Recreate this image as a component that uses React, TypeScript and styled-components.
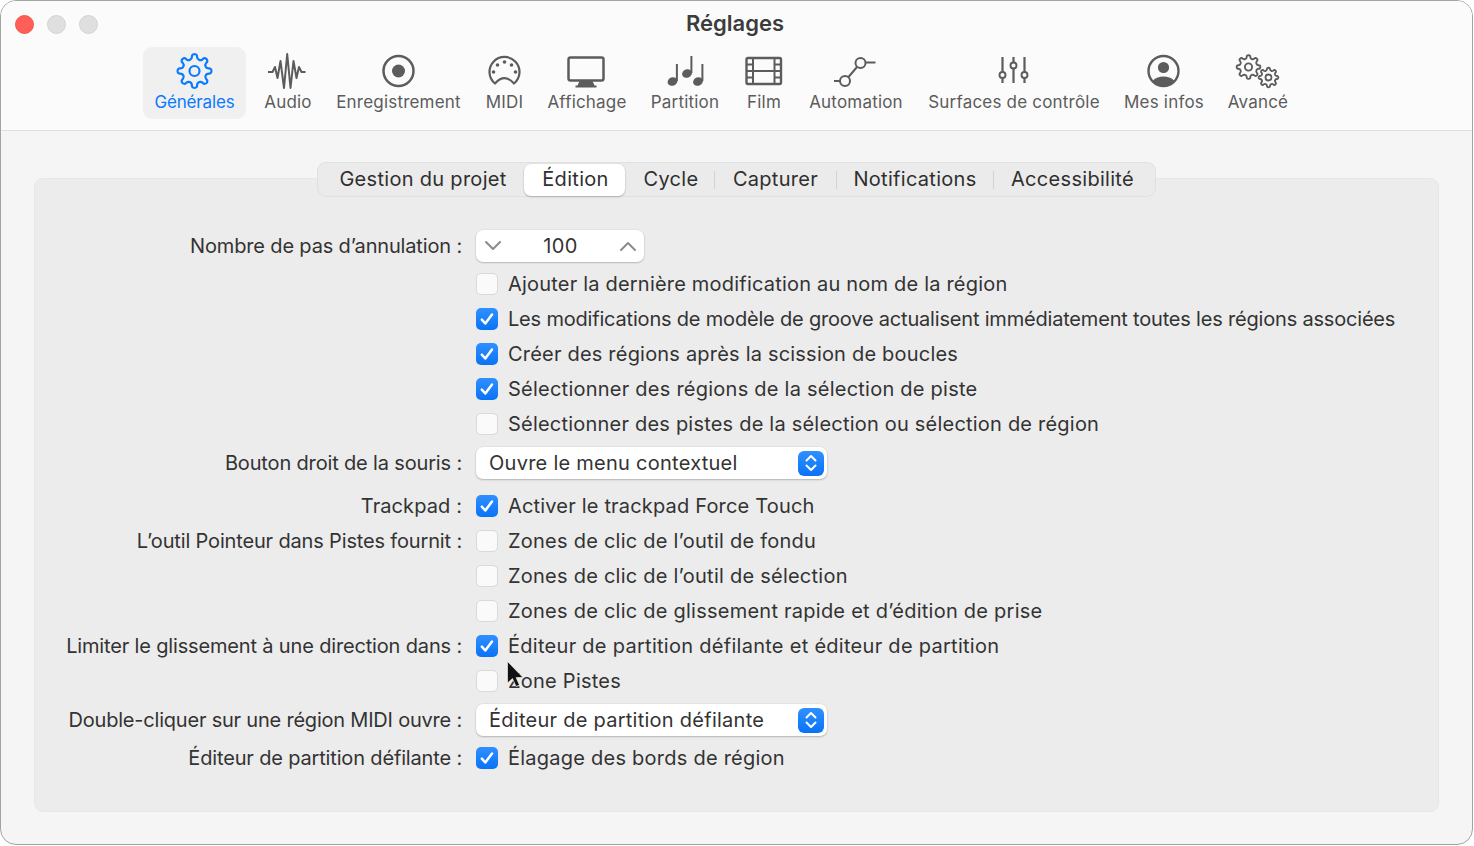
import React from "react";
import styled, { createGlobalStyle } from "styled-components";

const GlobalStyle = createGlobalStyle`
  html, body {
    margin: 0;
    padding: 0;
    background: #ffffff;
  }
  body {
    font-family: "Inter", "Liberation Sans", sans-serif;
    -webkit-font-smoothing: antialiased;
  }
`;

const Window = styled.div`
  position: relative;
  box-sizing: border-box;
  width: 1473px;
  height: 845px;
  border: 1px solid #a3a3a3;
  border-radius: 16px;
  overflow: hidden;
  background: #f5f5f5;
`;

const Toolbar = styled.header`
  box-sizing: border-box;
  height: 130px;
  background: #fbfbfb;
  border-bottom: 1px solid #dedede;
`;

const TitleBar = styled.div`
  display: grid;
  grid-template-columns: 1fr auto 1fr;
  align-items: center;
  height: 46px;
`;

const Lights = styled.div`
  display: flex;
  gap: 13px;
  padding-left: 14px;
`;

const Light = styled.span<{ $color: string; $edge: string }>`
  box-sizing: border-box;
  width: 19px;
  height: 19px;
  margin-top: 1px;
  border-radius: 50%;
  background: ${(p) => p.$color};
  border: 1px solid ${(p) => p.$edge};
`;

const Title = styled.h1`
  margin: 0 0 2px;
  font-size: 22px;
  line-height: 44px;
  font-weight: 600;
  color: #3c3c3c;
  transform: translateX(-1.5px);
`;

const ToolRow = styled.nav`
  display: flex;
  padding-left: 142px;
`;

const ToolItem = styled.div<{ $width: number; $active?: boolean }>`
  box-sizing: border-box;
  width: ${(p) => p.$width}px;
  height: 72px;
  padding-top: 5px;
  border-radius: 9px;
  background: ${(p) => (p.$active ? "#f0f0f0" : "transparent")};
  color: ${(p) => (p.$active ? "#0a7aff" : "#5c5c5c")};
  display: flex;
  flex-direction: column;
  align-items: center;
`;

const ToolLabel = styled.span<{ $active?: boolean }>`
  margin-top: 1px;
  font-size: 17px;
  line-height: 18px;
  letter-spacing: ${(p) => (p.$active ? "-0.15px" : "0.2px")};
  white-space: nowrap;
`;

const Content = styled.main`
  display: flex;
  flex-direction: column;
  align-items: center;
  padding: 31px 33px 0;
`;

const Tabs = styled.div`
  position: relative;
  z-index: 1;
  display: flex;
  align-items: center;
  box-sizing: border-box;
  height: 35px;
  margin: 0 0 -19px -1px;
  padding: 0 5px;
  background: #ebebeb;
  border: 1px solid #e0e0e0;
  border-radius: 9px;
`;

const Tab = styled.div<{ $width: number; $active?: boolean; $divider?: boolean; $shift?: number }>`
  position: relative;
  box-sizing: border-box;
  width: ${(p) => p.$width}px;
  height: 32px;
  line-height: 30px;
  padding-left: ${(p) => p.$shift ?? 0}px;
  text-align: center;
  font-size: 20px;
  letter-spacing: 0.3px;
  color: #2f2f2f;
  white-space: nowrap;
  border-radius: 7px;
  background: ${(p) => (p.$active ? "#ffffff" : "transparent")};
  box-shadow: ${(p) =>
    p.$active ? "0 1px 2px rgba(0,0,0,0.22), 0 0 0 0.5px rgba(0,0,0,0.05)" : "none"};

  &::after {
    content: "";
    display: ${(p) => (p.$divider ? "block" : "none")};
    position: absolute;
    right: 0;
    top: 7px;
    height: 18px;
    width: 1px;
    background: #d3d3d3;
  }
`;

const Panel = styled.section`
  box-sizing: border-box;
  width: 100%;
  height: 634px;
  padding-top: 48.5px;
  background: #ececec;
  border: 1px solid #e7e7e7;
  border-radius: 9px;
`;

const Row = styled.div<{ $height?: number; $pad?: number }>`
  box-sizing: border-box;
  display: grid;
  grid-template-columns: 427px 1fr;
  column-gap: 14px;
  align-items: center;
  height: ${(p) => p.$height ?? 35.2}px;
  padding-bottom: ${(p) => p.$pad ?? 0}px;
`;

const Label = styled.div<{ $spacing?: number }>`
  text-align: right;
  font-size: 20px;
  letter-spacing: ${(p) => p.$spacing ?? -0.16}px;
  color: #333333;
  white-space: nowrap;
`;

const CheckLine = styled.div<{ $spacing: number }>`
  display: flex;
  align-items: center;
  gap: 10px;
  font-size: 20px;
  letter-spacing: ${(p) => p.$spacing}px;
  color: #333333;
  white-space: nowrap;
`;

const Box = styled.span<{ $on?: boolean }>`
  box-sizing: border-box;
  flex: none;
  display: flex;
  align-items: center;
  justify-content: center;
  width: 22px;
  height: 22px;
  border-radius: 5px;
  background: ${(p) => (p.$on ? "linear-gradient(#2f90ff, #0a72f5)" : "#fafafa")};
  border: ${(p) => (p.$on ? "none" : "1px solid #d9d9d9")};
`;

const Stepper = styled.div`
  box-sizing: border-box;
  display: flex;
  align-items: center;
  justify-content: space-between;
  width: 168px;
  height: 32px;
  padding: 0 7px 0 8px;
  background: #ffffff;
  border-radius: 7px;
  box-shadow: 0 1px 2px rgba(0, 0, 0, 0.2), 0 0 0 0.5px rgba(0, 0, 0, 0.06);
  font-size: 20px;
  letter-spacing: 0.4px;
  color: #333333;
`;

const SelectBox = styled.div`
  box-sizing: border-box;
  display: flex;
  align-items: center;
  justify-content: space-between;
  width: 351px;
  height: 32px;
  padding: 0 3px 0 13px;
  background: #ffffff;
  border-radius: 7px;
  box-shadow: 0 1px 2px rgba(0, 0, 0, 0.22), 0 0 0 0.5px rgba(0, 0, 0, 0.06);
  font-size: 20px;
  letter-spacing: 0.26px;
  color: #333333;
  white-space: nowrap;
`;

const SelectKnob = styled.span`
  display: flex;
  align-items: center;
  justify-content: center;
  width: 26px;
  height: 25px;
  border-radius: 6px;
  background: linear-gradient(#2f90ff, #0a72f5);
`;

const Pointer = styled.svg`
  position: absolute;
  left: 504px;
  top: 659px;
`;

// gear outline with rounded lobes
const gearPath = (cx: number, cy: number, ro: number, ri: number, teeth: number) => {
  const step = (Math.PI * 2) / teeth;
  const pt = (r: number, a: number) =>
    `${(cx + r * Math.cos(a)).toFixed(2)} ${(cy + r * Math.sin(a)).toFixed(2)}`;
  let d = "";
  for (let i = 0; i < teeth; i++) {
    const a = i * step - Math.PI / 2;
    const w = step * 0.24;
    const start = pt(ri, a - step / 2);
    if (i === 0) d += `M${start} `;
    d += `Q${pt(ri, a - w * 1.25)} ${pt((ri + ro) / 2, a - w * 0.95)} `;
    d += `Q${pt(ro * 1.03, a - w * 0.9)} ${pt(ro * 1.03, a)} `;
    d += `Q${pt(ro * 1.03, a + w * 0.9)} ${pt((ri + ro) / 2, a + w * 0.95)} `;
    d += `Q${pt(ri, a + w * 1.25)} ${pt(ri, a + step / 2)} `;
  }
  return d + "Z";
};

const Glyph: React.FC<{ x: number; w: number; children: React.ReactNode }> = ({ x, w, children }) => (
  <svg width={w} height={40} viewBox={`${x + 0.5} 52 ${w} 40`} fill="none" stroke="currentColor" strokeWidth={2.2}>
    {children}
  </svg>
);

const GearIcon = () => (
  <Glyph x={174} w={40}>
    <path d={gearPath(194, 71, 16.5, 12, 8)} strokeLinejoin="round" />
    <circle cx={194} cy={71} r={5} />
  </Glyph>
);

const AudioIcon = () => (
  <Glyph x={268} w={40}>
    <path
      d="M268 72H273L275.5 67L278 78L281 61L284.5 88L287.7 54L291 88L294 61L297 78L299.5 67L302 72H306"
      strokeWidth={2}
      strokeLinejoin="round"
    />
  </Glyph>
);

const RecordIcon = () => (
  <Glyph x={378} w={40}>
    <circle cx={398} cy={71} r={15} strokeWidth={2.5} />
    <circle cx={398} cy={71} r={6.5} fill="currentColor" stroke="none" />
  </Glyph>
);

const MidiIcon = () => (
  <Glyph x={485} w={40}>
    <path
      d="M495.5 83.5A15 15 0 1 1 514.5 83.5C511 79.5 508 78.2 505 78.2C502 78.2 499 79.5 495.5 83.5Z"
      strokeLinejoin="round"
    />
    <g fill="currentColor" stroke="none">
      <circle cx={494} cy={72} r={1.8} />
      <circle cx={498} cy={65} r={1.8} />
      <circle cx={505} cy={62} r={1.8} />
      <circle cx={512} cy={65} r={1.8} />
      <circle cx={516} cy={72} r={1.8} />
    </g>
  </Glyph>
);

const DisplayIcon = () => (
  <Glyph x={567} w={40}>
    <rect x={569} y={57.5} width={35} height={23} rx={2} strokeWidth={2.5} />
    <path d="M580 81H593L595 85.5H597V87.5H576V85.5H578Z" fill="currentColor" stroke="none" />
  </Glyph>
);

const NotesIcon = () => (
  <Glyph x={665} w={40}>
    <g fill="currentColor" stroke="none">
      <ellipse cx={673} cy={81.5} rx={5} ry={4.2} transform="rotate(-20 673 81.5)" />
      <rect x={676.4} y={64} width={2} height={17} />
      <ellipse cx={687.5} cy={73.5} rx={5} ry={4.2} transform="rotate(-20 687.5 73.5)" />
      <rect x={690.9} y={56} width={2} height={17} />
      <ellipse cx={698.5} cy={81.5} rx={5} ry={4.2} transform="rotate(-20 698.5 81.5)" />
      <rect x={701.9} y={64} width={2} height={17} />
    </g>
  </Glyph>
);

const FilmIcon = () => (
  <Glyph x={744} w={40}>
    <rect x={747} y={58} width={34.5} height={26} rx={1.5} strokeWidth={2.4} />
    <path d="M753.5 58V84M775 58V84M753.5 71H775" strokeWidth={2} />
    <path d="M747 64.5H753M747 71H753M747 77.5H753M775.5 64.5H781M775.5 71H781M775.5 77.5H781" strokeWidth={1.8} />
  </Glyph>
);

const AutomationIcon = () => (
  <Glyph x={836} w={44}>
    <circle cx={847.5} cy={81} r={5} strokeWidth={2} />
    <circle cx={863} cy={63} r={5} strokeWidth={2} />
    <path d="M833 81H842.5M851 77L859.5 67M868 62.5H878" strokeWidth={2} />
  </Glyph>
);

const FaderIcon = () => (
  <Glyph x={994} w={40}>
    <path d="M1003 57V83M1014 57V83M1025 57V83" strokeWidth={2.2} />
    <g fill="#fbfbfb" strokeWidth={1.9}>
      <circle cx={1003} cy={75} r={3} />
      <circle cx={1014} cy={65.5} r={3} />
      <circle cx={1025} cy={75} r={3} />
    </g>
  </Glyph>
);

const PersonIcon = () => (
  <Glyph x={1144} w={40}>
    <circle cx={1164} cy={71} r={15} strokeWidth={2.4} />
    <circle cx={1164} cy={67.5} r={5.6} fill="currentColor" stroke="none" />
    <path d="M1153 81C1156 77.5 1160 76.5 1164 76.5C1168 76.5 1172 77.5 1175 81C1172 84.5 1168 86 1164 86C1160 86 1156 84.5 1153 81Z" fill="currentColor" stroke="none" />
  </Glyph>
);

const GearsIcon = () => (
  <Glyph x={1234} w={48}>
    <path d={gearPath(1249, 67, 11.5, 8.6, 8)} strokeWidth={1.9} strokeLinejoin="round" />
    <circle cx={1249} cy={67} r={3.6} strokeWidth={1.9} />
    <path d={gearPath(1269, 77.5, 9.6, 7.2, 8)} strokeWidth={1.8} strokeLinejoin="round" />
    <circle cx={1269} cy={77.5} r={3} strokeWidth={1.8} />
  </Glyph>
);

const Tick = () => (
  <svg width={16} height={16} viewBox="0 0 16 16" fill="none">
    <path d="M2.8 8.6L6.3 12.5L13 3.6" stroke="#ffffff" strokeWidth={2.5} strokeLinecap="round" strokeLinejoin="round" />
  </svg>
);

const Updown = () => (
  <svg width={14} height={20} viewBox="0 0 14 20" fill="none">
    <path d="M2.5 7.5L7 3L11.5 7.5M2.5 12.5L7 17L11.5 12.5" stroke="#ffffff" strokeWidth={2} strokeLinecap="round" strokeLinejoin="round" />
  </svg>
);

const Chevron: React.FC<{ up?: boolean }> = ({ up }) => (
  <svg width={18} height={12} viewBox="0 0 18 12" fill="none">
    <path d={up ? "M2 10L9 3L16 10" : "M2 2L9 9L16 2"} stroke="#8c8c8c" strokeWidth={2} strokeLinecap="round" strokeLinejoin="round" />
  </svg>
);

const tools = [
  { label: "Générales", width: 103, icon: <GearIcon />, active: true },
  { label: "Audio", width: 84, icon: <AudioIcon /> },
  { label: "Enregistrement", width: 137, icon: <RecordIcon /> },
  { label: "MIDI", width: 75, icon: <MidiIcon /> },
  { label: "Affichage", width: 90, icon: <DisplayIcon /> },
  { label: "Partition", width: 106, icon: <NotesIcon /> },
  { label: "Film", width: 52, icon: <FilmIcon /> },
  { label: "Automation", width: 132, icon: <AutomationIcon /> },
  { label: "Surfaces de contrôle", width: 184, icon: <FaderIcon /> },
  { label: "Mes infos", width: 116, icon: <PersonIcon /> },
  { label: "Avancé", width: 72, icon: <GearsIcon /> },
];

const tabs = [
  { label: "Gestion du projet", width: 201 },
  { label: "Édition", width: 101, active: true, shift: 3 },
  { label: "Cycle", width: 90, divider: true, shift: 3 },
  { label: "Capturer", width: 122 , divider: true },
  { label: "Notifications", width: 157, divider: true },
  { label: "Accessibilité", width: 156, shift: 2 },
];

const Check: React.FC<{ on?: boolean; text: string; spacing?: number }> = ({ on, text, spacing = 0.24 }) => (
  <CheckLine $spacing={spacing}>
    <Box $on={on}>{on && <Tick />}</Box>
    {text}
  </CheckLine>
);

const App: React.FC = () => {
  return (
    <>
      <GlobalStyle />
      <Window>
        <Toolbar>
          <TitleBar>
            <Lights>
              <Light $color="#ff5f57" $edge="#f0564e" />
              <Light $color="#dfdfdf" $edge="#d2d2d2" />
              <Light $color="#dfdfdf" $edge="#d2d2d2" />
            </Lights>
            <Title>Réglages</Title>
          </TitleBar>
          <ToolRow>
            {tools.map((tool) => (
              <ToolItem key={tool.label} $width={tool.width} $active={tool.active}>
                {tool.icon}
                <ToolLabel $active={tool.active}>{tool.label}</ToolLabel>
              </ToolItem>
            ))}
          </ToolRow>
        </Toolbar>
        <Content>
          <Tabs>
            {tabs.map((tab) => (
              <Tab key={tab.label} $width={tab.width} $active={tab.active} $divider={tab.divider} $shift={tab.shift}>
                {tab.label}
              </Tab>
            ))}
          </Tabs>
          <Panel>
            <Row $height={38.5} $pad={2.5}>
              <Label>Nombre de pas d’annulation :</Label>
              <Stepper>
                <Chevron />
                100
                <Chevron up />
              </Stepper>
            </Row>
            <Row>
              <span />
              <Check spacing={0.2} text="Ajouter la dernière modification au nom de la région" />
            </Row>
            <Row>
              <span />
              <Check on spacing={-0.19} text="Les modifications de modèle de groove actualisent immédiatement toutes les régions associées" />
            </Row>
            <Row>
              <span />
              <Check on spacing={0.2} text="Créer des régions après la scission de boucles" />
            </Row>
            <Row>
              <span />
              <Check on text="Sélectionner des régions de la sélection de piste" />
            </Row>
            <Row>
              <span />
              <Check spacing={0.21} text="Sélectionner des pistes de la sélection ou sélection de région" />
            </Row>
            <Row $height={46} $pad={3}>
              <Label>Bouton droit de la souris :</Label>
              <SelectBox>
                Ouvre le menu contextuel
                <SelectKnob>
                  <Updown />
                </SelectKnob>
              </SelectBox>
            </Row>
            <Row>
              <Label $spacing={0.1}>Trackpad :</Label>
              <Check on spacing={0.18} text="Activer le trackpad Force Touch" />
            </Row>
            <Row>
              <Label>L’outil Pointeur dans Pistes fournit :</Label>
              <Check text="Zones de clic de l’outil de fondu" />
            </Row>
            <Row>
              <span />
              <Check text="Zones de clic de l’outil de sélection" />
            </Row>
            <Row>
              <span />
              <Check text="Zones de clic de glissement rapide et d’édition de prise" />
            </Row>
            <Row>
              <Label>Limiter le glissement à une direction dans :</Label>
              <Check on spacing={0.28} text="Éditeur de partition défilante et éditeur de partition" />
            </Row>
            <Row>
              <span />
              <Check text="Zone Pistes" />
            </Row>
            <Row $height={42}>
              <Label $spacing={-0.21}>Double-cliquer sur une région MIDI ouvre :</Label>
              <SelectBox>
                Éditeur de partition défilante
                <SelectKnob>
                  <Updown />
                </SelectKnob>
              </SelectBox>
            </Row>
            <Row $height={34.5}>
              <Label>Éditeur de partition défilante :</Label>
              <Check on text="Élagage des bords de région" />
            </Row>
          </Panel>
        </Content>
        <Pointer width={24} height={32} viewBox="0 0 24 32">
          <path
            d="M2.5 1.5V23L7.5 18.5L11 26.5L14.5 25L11 17.5H18Z"
            fill="#111111"
            stroke="#ffffff"
            strokeOpacity={0.6}
            strokeWidth={1}
          />
        </Pointer>
      </Window>
    </>
  );
};

export default App;
